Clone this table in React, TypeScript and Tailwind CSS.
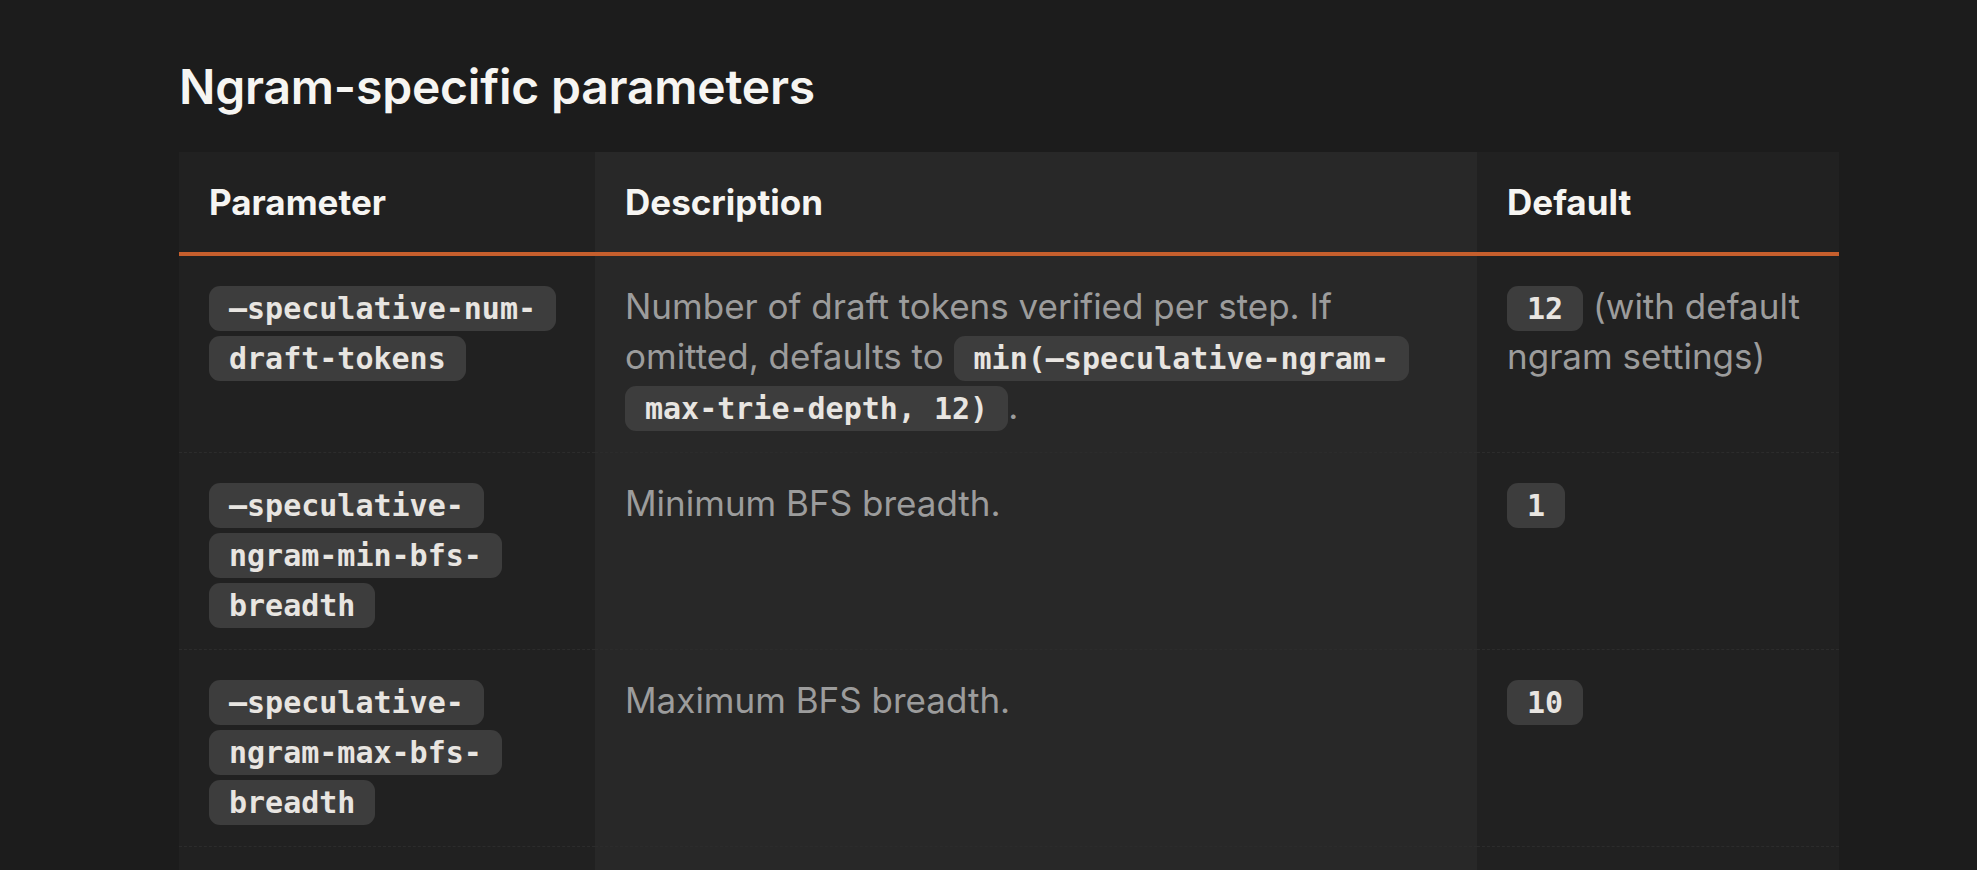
import React from "react";

type Part = string | { code: string };

type Row = {
  param: string;
  desc: Part[];
  def: Part[];
};

const rows: Row[] = [
  {
    param: "—speculative-num-draft-tokens",
    desc: [
      "Number of draft tokens verified per step. If omitted, defaults to ",
      { code: "min(—speculative-ngram-max-trie-depth, 12)" },
      ".",
    ],
    def: [{ code: "12" }, " (with default ngram settings)"],
  },
  {
    param: "—speculative-ngram-min-bfs-breadth",
    desc: ["Minimum BFS breadth."],
    def: [{ code: "1" }],
  },
  {
    param: "—speculative-ngram-max-bfs-breadth",
    desc: ["Maximum BFS breadth."],
    def: [{ code: "10" }],
  },
  {
    param: "—speculative-ngram-match-type",
    desc: ["Ngram tree-building mode."],
    def: [{ code: "BFS" }],
  },
];

function Code({ children }: { children: string }) {
  return (
    <code className="rounded-[11px] bg-[#3d3d3d] px-[20px] py-[5px] font-['DejaVu_Sans_Mono',monospace] text-[30px] leading-none font-bold text-[#e8e5e1] box-decoration-clone">
      {children}
    </code>
  );
}

function Parts({ parts }: { parts: Part[] }) {
  return (
    <>
      {parts.map((p, i) =>
        typeof p === "string" ? <span key={i}>{p}</span> : <Code key={i}>{p.code}</Code>
      )}
    </>
  );
}

export default function App() {
  return (
    <div className="min-h-screen w-full bg-[#1c1c1c] pl-[179px] pt-[58px] font-['Inter',sans-serif]">
      <h2 className="mb-[36px] text-[48px] leading-[58px] font-semibold tracking-[-0.2px] text-[#f6f5f2]">
        Ngram-specific parameters
      </h2>

      <table className="w-[1660px] table-fixed border-collapse text-left">
        <colgroup>
          <col className="w-[416px]" />
          <col className="w-[882px]" />
          <col className="w-[362px]" />
        </colgroup>
        <thead>
          <tr className="border-b-4 border-[#c65f2d] text-[35px] leading-[50px] font-bold text-[#f6f5f2]">
            <th className="bg-[#212121] px-[30px] py-[25px] font-bold">Parameter</th>
            <th className="bg-[#282828] px-[30px] py-[25px] font-bold">Description</th>
            <th className="bg-[#212121] px-[30px] py-[25px] font-bold">Default</th>
          </tr>
        </thead>
        <tbody className="text-[35px] leading-[50px] text-[#9c9c9c]">
          {rows.map((r) => (
            <tr key={r.param} className="border-b border-dashed border-[#2c2c2c] align-top">
              <td className="bg-[#212121] px-[30px] pt-[25px] pb-[21px]">
                <Code>{r.param}</Code>
              </td>
              <td className="bg-[#282828] px-[30px] pt-[25px] pb-[21px]">
                <Parts parts={r.desc} />
              </td>
              <td className="bg-[#212121] px-[30px] pt-[25px] pb-[21px]">
                <Parts parts={r.def} />
              </td>
            </tr>
          ))}
        </tbody>
      </table>
    </div>
  );
}
